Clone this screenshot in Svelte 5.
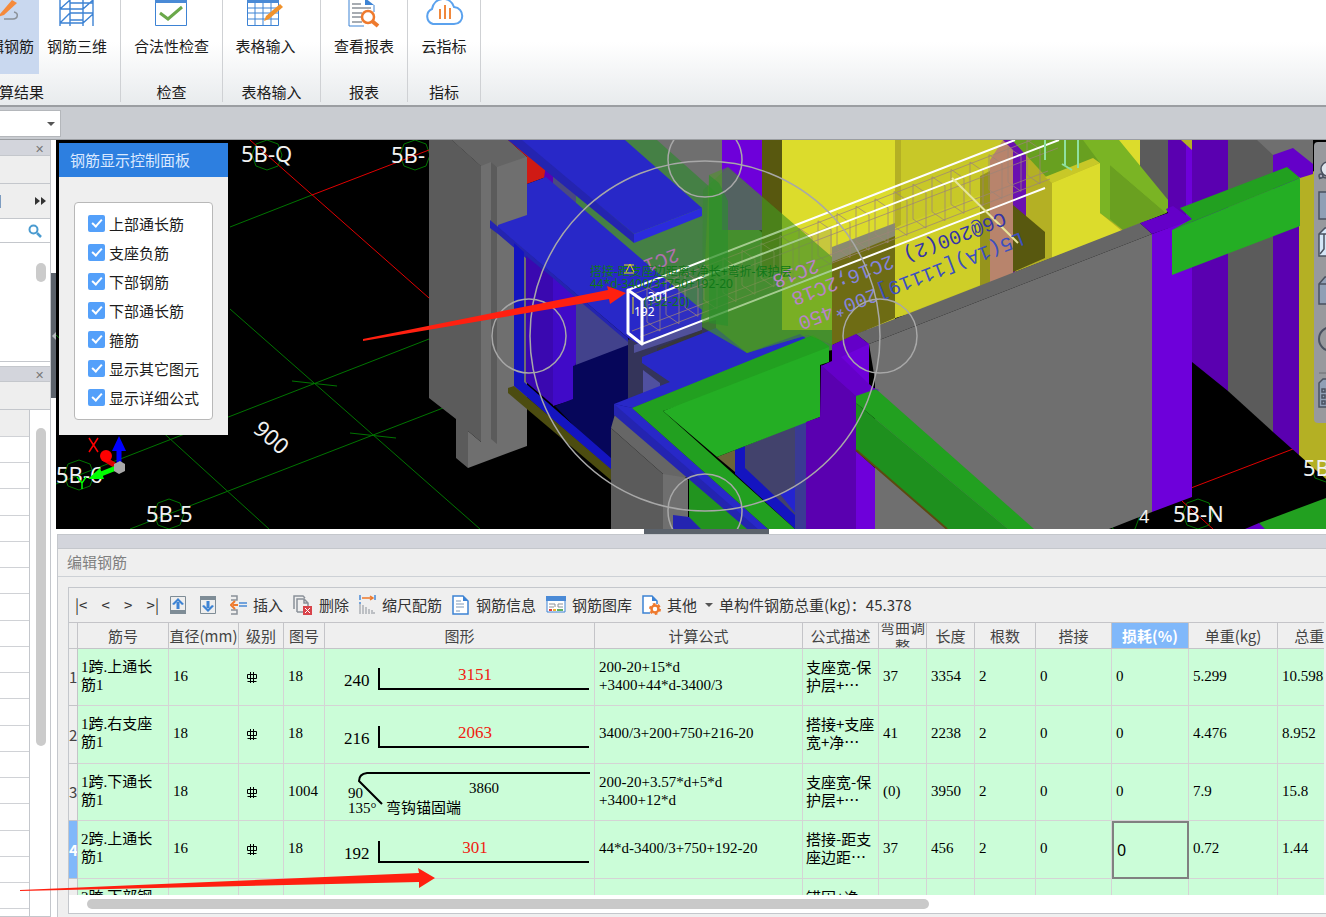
<script lang="ts">
  const filters = $state([
    { label: '上部通长筋', on: true },
    { label: '支座负筋', on: true },
    { label: '下部钢筋', on: true },
    { label: '下部通长筋', on: true },
    { label: '箍筋', on: true },
    { label: '显示其它图元', on: true },
    { label: '显示详细公式', on: true }
  ]);

  const columns = [
    { title: '', width: 9 },
    { title: '筋号', width: 91 },
    { title: '直径(mm)', width: 70 },
    { title: '级别', width: 45 },
    { title: '图号', width: 41 },
    { title: '图形', width: 270 },
    { title: '计算公式', width: 208 },
    { title: '公式描述', width: 76 },
    { title: '弯曲调整', width: 48 },
    { title: '长度', width: 48 },
    { title: '根数', width: 61 },
    { title: '搭接', width: 76 },
    { title: '损耗(%)', width: 77 },
    { title: '单重(kg)', width: 89 },
    { title: '总重(kg)', width: 90 }
  ];
  const tableWidth = columns.reduce((sum, c) => sum + c.width, 0);

  const bars = [
    { name: '1跨.上通长筋1', d: 16, shape: 18, side: '240', main: '3151', formula: ['200-20+15*d', '+3400+44*d-3400/3'], desc: ['支座宽-保', '护层+…'], bend: '37', len: 3354, weight: '5.299', total: '10.598' },
    { name: '1跨.右支座筋1', d: 18, shape: 18, side: '216', main: '2063', formula: ['3400/3+200+750+216-20'], desc: ['搭接+支座', '宽+净…'], bend: '41', len: 2238, weight: '4.476', total: '8.952' },
    { name: '1跨.下通长筋1', d: 18, shape: 1004, side: '90', main: '3860', hook: true, formula: ['200-20+3.57*d+5*d', '+3400+12*d'], desc: ['支座宽-保', '护层+…'], bend: '(0)', len: 3950, weight: '7.9', total: '15.8' },
    { name: '2跨.上通长筋1', d: 16, shape: 18, side: '192', main: '301', formula: ['44*d-3400/3+750+192-20'], desc: ['搭接-距支', '座边距…'], bend: '37', len: 456, weight: '0.72', total: '1.44' }
  ];
  const current = 3;
  let loss = $state('0');

  // stirrups of the selected beam, spaced evenly along its axis
  const slope = 0.387;
  const stirrups = Array.from({ length: 21 }, (_, i) => {
    const x = 660 + i * 19;
    const top = 300 - (x - 642) * slope;
    return { x, top: top + 3, bottom: top + 38 };
  });

  const marks = [
    { x: 267, y: 155 },
    { x: 415, y: 155 },
    { x: 169, y: 514 },
    { x: 79, y: 475 },
    { x: 1198, y: 514 },
    { x: 1124, y: 518 },
    { x: 1326, y: 467 }
  ];
  const rows = Array.from({ length: 19 });
</script>

<div class="app" lang="zh-CN">
  <header class="ribbon">
    <section class="group results">
      <div class="tools">
        <button class="tool active">
          <svg width="39" height="32" viewBox="0 0 39 32"><path d="M0 14 12 0l5 3L4 15l-6 2z" fill="#f58a3c" /><path d="M4 19h9c5 0 6-6 1-7" fill="none" stroke="#8b9199" stroke-width="1.5" /></svg>
          <span>编辑钢筋</span>
        </button>
        <button class="tool wide">
          <svg width="36" height="32" viewBox="0 0 36 32"><path d="M1 0v26M11 0v26M24 0v26M34 0v26M1 9 11 0M1 9h23l10-9M11 3h23M1 23h23l10-9M1 23 11 13h23M11 20h13" fill="none" stroke="#3d83d4" stroke-width="1.4" /></svg>
          <span>钢筋三维</span>
        </button>
      </div>
      <span class="caption">计算结果</span>
    </section>
    <section class="group check">
      <button class="tool">
        <svg width="32" height="32" viewBox="0 0 32 32"><path d="M.5-2h31v27.500h-31z" fill="#fff" stroke="#3d83d4" /><path d="M0-2h32v5H0z" fill="#4a8ad6" /><path d="m5 13 8 6L27 7" fill="none" stroke="#6aa84a" stroke-width="3" /></svg>
        <span>合法性检查</span>
      </button>
      <span class="caption">检查</span>
    </section>
    <section class="group input">
      <button class="tool">
        <svg width="36" height="32" viewBox="0 0 36 32"><path d="M.5 1h31v24.500H.5z" fill="#fff" stroke="#3d83d4" /><path d="M0-1h32v4H0z" fill="#4a8ad6" /><path d="M0 8h31M0 13h31M0 19h31M8 3v22M16 3v22M24 3v22" stroke="#3d83d4" /><path d="m17 21 2-5L33 4l3 3-14 12z" fill="#f0922c" /></svg>
        <span>表格输入</span>
      </button>
      <span class="caption">表格输入</span>
    </section>
    <section class="group report">
      <button class="tool">
        <svg width="32" height="32" viewBox="0 0 32 32"><path d="M17-1H1v27h15M26 5v7" fill="none" stroke="#3d83d4" /><path d="M17-2v7h9z" fill="#3d83d4" /><path d="M4 4h9M4 8h19M4 13h10M4 17h9M4 22h10" stroke="#8b9199" stroke-width="1.500" /><circle cx="20" cy="17" r="6" fill="#fff" stroke="#ee7a2e" stroke-width="2.500" /><path d="m24 21 6 5" stroke="#ee7a2e" stroke-width="4" /></svg>
        <span>查看报表</span>
      </button>
      <span class="caption">报表</span>
    </section>
    <section class="group index">
      <button class="tool">
        <svg width="40" height="32" viewBox="0 0 40 32"><path d="M9 24a8 8 0 0 1-1-15C10-3 26-5 30 7c11 1 11 17 0 17z" fill="#fff" stroke="#5ba2ee" stroke-width="2" /><path d="M16 9v10M21 5v14M26 8v11" stroke="#f0883c" stroke-width="2" /></svg>
        <span>云指标</span>
      </button>
      <span class="caption">指标</span>
    </section>
  </header>

  <div class="selector">
    <select aria-label="楼层"><option></option></select>
    <span class="caret"></span>
  </div>

  <div class="workspace">
    <aside class="dock">
      <div class="dock-head"><button aria-label="关闭">✕</button></div>
      <div class="dock-bar"></div>
      <div class="dock-bar more">
        <i class="stub"></i>
        <svg width="11" height="8" viewBox="0 0 11 8"><path d="m0 0 5 4-5 4zM6 0l5 4-5 4z" fill="#333" /></svg>
      </div>
      <div class="search">
        <svg width="14" height="14" viewBox="0 0 14 14"><circle cx="5.500" cy="5.500" r="4" fill="none" stroke="#4a9bd0" stroke-width="2" /><path d="m9 9 4 4" stroke="#4a9bd0" stroke-width="2.500" /></svg>
      </div>
      <div class="tree"><i class="thumb short"></i></div>
      <div class="dock-head second"><button aria-label="关闭">✕</button></div>
      <div class="dock-bar"></div>
      <div class="props">
        <div class="lines">{#each rows as _}<i></i>{/each}</div>
        <i class="thumb long"></i>
      </div>
    </aside>
    <div class="split">
      <button class="fold" aria-label="收起"><svg width="5" height="8" viewBox="0 0 5 8"><path d="M5 0v8L1 4z" fill="#b8bcc2" /></svg></button>
    </div>

    <main>
      <div class="view">
        <svg class="scene" viewBox="56 140 1270 389" preserveAspectRatio="xMinYMin slice">
          <rect x="56" y="140" width="1270" height="389" fill="#000" />
          <g stroke="#007400" fill="none">
            <path d="m56 484 373-145M130 529l313-121M230 227l82-32M230 309l250 220M56 335l213 194M292 381l45 5M350 433l46 5" />
            {#each marks as m}
              <path d="M{m.x} {m.y - 15}l11 4 4 11-4 11-11 4-11-4-4-11 4-11z" />
            {/each}
          </g>
          <path d="m250 140 179 158M312 195l117-45M1191 488l102-39M1182 501l31 28" stroke="#e00000" fill="none" />

          <!-- left column -->
          <path fill="#6f6f6f" d="m452 140 56 0 19 17v289l-59 22v-37l13 11V166z" />
          <path fill="#646464" d="m452 140h56l18 17-29 10-6-5-10 4z" />
          <path fill="#5b5b5b" d="m429 140h23l29 26v276l-13-11v37l-12-10v-39l-27-21zM491 162l6 5v277l-6-5z" />
          <!-- rooms behind the slabs -->
          <path fill="#458045" d="M553 172V140h170v60l60 50 50 20v80l-120 20-160-180z" />
          <path fill="#6f6f6f" d="m657 140h65v58z" />
          <path fill="#6e00da" d="m722 140h40v90h-40z" />
          <path fill="#58580f" d="m762 140h20v130h-20z" />
          <path fill="#dcdc2c" d="m782 140h113v190h-113z" />
          <path fill="#c8c828" d="M895 140h120v145l-120 33z" />
          <path fill="#b4b024" d="M895 140h6v90h-6zM1010 140h130v84l-130 50z" />
          <path fill="#cece28" d="M901 225l79-30v90l-85 33v-90z" />
          <path fill="#6e6c14" d="m832 258 63-26v86l-63 27z" />
          <path fill="#8a8a70" d="m832 247 63-24v13l-63 26z" />
          <path fill="#96941c" d="m980 176 10-5v118l-10 4z" />
          <path fill="#b8846c" d="m990 160 13-20h10v140l-23 10z" />
          <path fill="#6a10b0" d="m1003 140h10l13 15v100l-13 20V150z" />
          <path fill="#58580f" d="m1013 205 32 27v26l-32 14z" />
          <path fill="#68a020" d="M1012 140h78l10 23-50 18z" />
          <path fill="#c8c828" d="m1045 177 48-19 7 5-48 20z" />
          <path fill="#dcdc2c" d="m1052 183 48-20v50l22 18-70 27zM1118 140h22v35l-22-18z" />
          <path fill="#5b5b5b" d="M1140 140h28v70l-28-30z" />
          <path fill="#7ab424" d="m1083 140h36l54 66-7 7-43 17-23-17v-50z" />
          <path fill="#6aa020" d="m1110 165 56 48-43 17-13-11z" />
          <path fill="#7ab424" d="m1110 165V148l63 58-7 7z" />

          <path fill="#d01a14" d="m508 140h13l25 27v10l-19 7v-27z" />
          <path fill="#5a00b4" d="m546 165 7 7v14l-9-8z" />
          <path fill="#4a4a80" d="m553 172 23 21v13l-23-20z" />
          <path fill="#34345a" d="m626 340 90-20v60l-84 32-21 10z" />
          <path fill="#2828c8" d="m498 225 29-10v-31l19-7 99 85 57 48-2 18-58 18-14-8-130-110z" />
          <path fill="#2424b0" d="m490 220 138 118v8L498 234l-8-6z" />
          <path fill="#2828c8" d="m520 140h105l77 68-68 26z" />
          <path fill="#2424b0" d="m508 140h14l112 94v9z" />
          <path fill="#2b2bdc" d="m634 234 68-26v8l-68 27z" />
          <path fill="#3a08b0" d="m526 256 27 22v127l-27-23z" />
          <path fill="#400ac8" d="m553 278 23 20v64l-3 38-20 6z" />
          <path fill="#42428c" d="m576 298 52 44v6l-52 20z" />
          <path fill="#06065a" d="m573 366 55-21v70l-17 15v34l-56-58 18-7z" />
          <path fill="#1414c0" d="m514 243 10 9v130l87 76v12l-97-84z" />
          <path fill="#4c4c10" d="m508 388 6-2 98 84v11L508 393z" />
          <path fill="#50509a" d="m634 345 68-24v9l-68 23z" />
          <path fill="#38383a" d="m657 348 45-18v8l-45 18z" />
          <path fill="#5050a0" d="m643 370 17 13v6l-17 8z" />

          <!-- middle ledge -->
          <path fill="#22941f" d="m689 472 66 57h-66z" />
          <path fill="#6f6f6f" d="m663 474 12-6 13 12v45l-10 4h-15z" />
          <path fill="#666" d="m611 428 4-14 74 64-26-4z" />
          <path fill="#5b5b5b" d="m611 428 52 46v55h-52z" />
          <path fill="#2424b0" d="m673 515 16 2 12 12h-28z" />
          <path fill="#6b6438" d="m717 457 18-7v22z" />
          <path fill="#42426c" d="m745 446 61-25v108l-61-59z" />
          <path fill="#1414c0" d="m735 450 10-4v22l50 47v14l-60-55z" />
          <path fill="#2424d0" d="m780 494 16-8v28z" />
          <path fill="#3a3a94" d="m795 426 11-5v108h-11z" />
          <path fill="#2828c8" d="m642 357 74-29 31 25 53-19 7 5-175 69-18-4 56-22-28-19z" />
          <path fill="#2424b0" d="m614 404 18 4 136 121h-21L614 415z" />
          <path fill="#2828c8" d="m614 404 18 4 136 121h-10z" />
          <path fill="#22a020" d="m632 408 181-73 16 11v10l-166 55 132 118h-27z" />
          <path fill="#24ae24" d="m663 411 166-64v15l-9 3v52l-103 40z" />

          <!-- long wall and the posts on its ends -->
          <path fill="#6f6f6f" d="m869 344 283-110v278l-43 17H875V380z" />
          <path fill="#6e00da" d="m838 352 31-10v44l10 4-23 14zM855 450l20 18v61h-20z" />
          <path fill="#666" d="m856 334 284-111 12 11-283 110z" />
          <path fill="#6400c8" d="m832 345 24-11 13 10-28 13 28 27 6 5-19 8-35-31 11-5z" />
          <path fill="#5a00b0" d="m821 365 35 31v133h-50V422l14-5z" />
          <path fill="#22a020" d="m856 396 20-7 158 140h-26L856 403z" />
          <path fill="#1e901e" d="m856 403 152 126h-61l-91-79z" />
          <path d="m856 450 91 79" stroke="#5c4a10" stroke-width="2" />

          <!-- right side -->
          <path fill="#5a00b0" d="M1168 140h60v251l-36-29-24-130z" />
          <path fill="#6e00da" d="M1186 140h6v90h-6zM1152 234l40-15v278l-40 15z" />
          <path fill="#6400c8" d="m1140 223 28-10-2-4 7-3 19 14-40 14z" />
          <path fill="#5b5b5b" d="M1228 140h45v292l-45-41z" />
          <path fill="#6f6f6f" d="M1257 140h56v25l-40-10z" />
          <path fill="#5a00b0" d="M1273 155h26v300l-26-23z" />
          <path fill="#b4b024" d="m1299 176 14-5 13 9v299l-27-24zM1181 140h11v10z" />
          <path fill="#6400c8" d="m1273 155 20-7 20 16v10l-13 4-13-11-14 6z" />
          <path fill="#22a020" d="m1180 208 107-41 13 11-128 52 20-11z" />
          <path fill="#24ae24" d="m1172 230 128-52v48l-128 49z" />
          <path fill="#6400c8" d="m1245 529 14-6 8 6z" />
          <path fill="#22a020" d="m1259 523 67-25v31h-61z" />

          <!-- selected beam -->
          <path d="m642 300 190-75v47l-190 72z" fill="#5050a0" opacity="0.15" />
          <path fill="#2f8f20" fill-opacity="0.3" d="m703 190 25-23 104 90v88l-24-10-61 18-45-26z" />
          <g fill="none" stroke="#9c8478" stroke-opacity="0.75">
            {#each stirrups as s}
              <path d="M{s.x} {s.top}V{s.bottom}l-13-9V{s.top - 9}z" />
            {/each}
            <path d="m632 331 416-160M640 337l410-158M634 294l400-155M648 305l410-157" />
          </g>
          <g fill="none" stroke="#fff" stroke-width="2">
            <path d="m628 290 387-150M642 300l417-160M642 344l403-156" />
            <path d="m628 290 14 10v44l-14-11z" stroke-width="3" stroke-linejoin="round" />
          </g>
          <path d="m952 178 66 65" stroke="#e6e69a" stroke-width="2" />
          <path d="M1065 140v25M1078 140v28M1062 164l10 6M1045 140v20" stroke="#8fe0a0" stroke-width="2" />
          <path fill="#4c9a20" fill-opacity="0.5" d="m728 167 104 90v88l-24-10-61 18-45-26 7-152z" />
          <path fill="#28902c" fill-opacity="0.6" d="m709 175 10 8 9 18v125l-19-3z" />
          <g class="plan" font-size="20">
            <text transform="translate(1021 232) rotate(159)" fill="#3c50c0">L5(1A)[11119]<tspan fill="#8484dc">200*</tspan><tspan fill="#b884c8">450</tspan></text>
            <text transform="translate(1003 212) rotate(159)" fill="#3434a8">C6@200(2)<tspan fill="#8484dc" dx="12">2C16;</tspan><tspan fill="#b884c8">2C18</tspan></text>
            <text transform="translate(816 259) rotate(159)" fill="#b884c8">2C18</text>
            <text transform="translate(676 248) rotate(159)" fill="#b070b0">2C1</text>
          </g>
          <g fill="#107818" font-size="12">
            <text x="590" y="276">搭接-距支座边距离+净长+弯折-保护层</text>
            <text x="590" y="288">44*d-3400/3+750+192-20</text>
            <text x="644" y="306">(192-20)</text>
          </g>
          <path d="M624 265h10M634 273h-10M626 272l4-8 4 8M633 297v17" stroke="#e8e020" fill="none" />
          <g fill="#fff" font-size="12"><text x="648" y="301">301</text><text x="634" y="316">192</text></g>

          <g fill="none" stroke="#a8a8a8" stroke-width="1.500">
            <circle cx="705" cy="336" r="175" />
            <circle cx="529" cy="336" r="37" />
            <circle cx="705" cy="160" r="37" />
            <circle cx="880" cy="336" r="37" />
            <circle cx="705" cy="511" r="37" />
          </g>

          <g fill="#f2f2f2" font-size="22">
            <text x="241" y="162">5B-Q</text>
            <text x="391" y="163">5B-</text>
            <text x="146" y="522">5B-5</text>
            <text x="56" y="483">5B-6</text>
            <text x="1173" y="522">5B-N</text>
            <text x="1303" y="476">5B</text>
            <text x="1139" y="523" font-size="18">4</text>
            <text transform="translate(252 431) rotate(41)">900</text>
          </g>
          <!-- axes -->
          <path d="M116 466 103 458" stroke="#e00000" stroke-width="5" />
          <circle cx="106" cy="456" r="6" fill="#f00" />
          <path d="M119 466v-20" stroke="#00f" stroke-width="5" />
          <path d="m119 436 7 15h-14z" fill="#00f" />
          <path d="m116 468-20 8" stroke="#0f0" stroke-width="5" />
          <path d="m88 479 12-11 4 11z" fill="#0f0" />
          <path d="M114 464l6-3 5 3v7l-6 3-5-3z" fill="#a8a8a8" />
          <path d="m89 438 9 14M98 438l-9 14" stroke="#f00" stroke-width="1.500" />
          <path d="m77 477 5 6 4-6M82 483v6" stroke="#0f0" stroke-width="1.500" fill="none" />

          <path d="m363 339 245-49-1-4 19 7-16 11-1-5-246 42z" fill="#ff2010" />
        </svg>

        <div class="panel">
          <h2>钢筋显示控制面板</h2>
          <div class="panel-body">
            {#each filters as f}
              <label><input type="checkbox" bind:checked={f.on} />{f.label}</label>
            {/each}
          </div>
        </div>

        <div class="viewbar">
          <svg width="12" height="281" viewBox="0 0 12 281">
            <g stroke="#4a5260" stroke-width="1.500">
              <circle cx="14" cy="27" r="7" fill="#dfe5ec" /><path d="m5 37 3-2 4 1" fill="none" /><circle cx="7" cy="34" r="2" fill="#aab" />
              <path d="M5 50h10v27H5z" fill="#8f9fb5" />
              <path d="m5 92 6-6h5v28H5z" fill="#d3e6f6" /><path d="M5 92h8M10 92v15l-4 5" fill="none" />
              <path d="m5 142 6-7h5v27H5z" fill="#8f9fb5" /><path d="M5 142h9" />
              <circle cx="17" cy="197" r="12" fill="none" stroke-width="2" />
              <path d="m5 241 4-4h5v28H5z" fill="#8f9fb5" /><path d="M8 247h3v3H8zM8 253h3v3H8zM8 259h3v3H8z" fill="none" />
            </g>
            <path d="M5 231h7" stroke="#6a6c70" />
          </svg>
        </div>
      </div>

      <div class="grip"><i></i></div>

      <section class="editor">
        <div class="strip"></div>
        <h2>编辑钢筋</h2>
        <div class="box">
          <div class="toolbar">
            <div class="nav">
              <button>|&lt;</button><button>&lt;</button><button>&gt;</button><button>&gt;|</button>
            </div>
            <button class="ico" aria-label="上移"><svg width="16" height="18" viewBox="0 0 16 18"><path d="M.5.500h15v17H.5z" fill="#eee" stroke="#7e8c96" /><path d="M0 14h16v4H0z" fill="#7e8c96" /><path d="M8 13V6" stroke="#3d83d4" stroke-width="3" /><path d="m2 8 6-6 6 6-2 1-4-4-4 4z" fill="#3d83d4" /></svg></button>
            <button class="ico" aria-label="下移"><svg width="16" height="18" viewBox="0 0 16 18"><path d="M.5.500h15v17H.5z" fill="#eee" stroke="#7e8c96" /><path d="M0 0h16v4H0z" fill="#7e8c96" /><path d="M8 5v7" stroke="#3d83d4" stroke-width="3" /><path d="m2 10 6 6 6-6-2-1-4 4-4-4z" fill="#3d83d4" /></svg></button>
            <button class="act"><svg width="17" height="20" viewBox="0 0 17 20"><path d="M1 1h6v4H1M1 15h6v4H1" fill="none" stroke="#8b9199" stroke-width="1.500" /><path d="M8 10H3M5 6 1 10l4 4" fill="none" stroke="#ee7a2e" stroke-width="2" /><path d="M9 8h8M9 11h8" stroke="#4a8ad6" stroke-width="1.500" /></svg>插入</button>
            <button class="act"><svg width="20" height="20" viewBox="0 0 20 20"><path d="M1 14V1h9l2 2M4 17V4h7l4 4v3M10 17H4M11 4v4h4" fill="none" stroke="#8b9199" stroke-width="1.500" /><path d="M10 11h9v9h-9z" fill="#d9434a" /><path d="m12 13 5 5M17 13l-5 5" stroke="#fff" /></svg>删除</button>
            <button class="act"><svg width="17" height="20" viewBox="0 0 17 20"><path d="M1 0v5M16 0v5M1 7v2" stroke="#4a8ad6" stroke-width="1.500" /><path d="M3 3h10M11 1l3 2-3 2" stroke="#ee7a2e" fill="none" stroke-width="1.500" /><path d="M1 9v10M4 10v9M7 12v7M10 14v5M13 15v4M15 17v2" stroke="#8b9199" /></svg>缩尺配筋</button>
            <button class="act"><svg width="18" height="20" viewBox="0 0 18 20"><path d="M1 1h10l5 5v13H1z" fill="#fff" stroke="#3d83d4" stroke-width="1.500" /><path d="M11 1v5h5z" fill="#3d83d4" /><path d="M4 6h5M4 9h8M4 12h8M4 16h4" stroke="#7e9ab8" /></svg>钢筋信息</button>
            <button class="act"><svg width="20" height="18" viewBox="0 0 20 18"><path d="M1 1h18v15H1z" fill="#fff" stroke="#3d83d4" /><path d="M0 0h20v5H0z" fill="#4a8ad6" /><path d="M3 8h6v3M17 8h-5v3h5M3 11h5" stroke="#8b9199" fill="none" /><path d="M3 14h3" stroke="#e04040" stroke-width="2" /><path d="M7 14h3" stroke="#f0b030" stroke-width="2" /><path d="M11 14h6" stroke="#60b060" stroke-width="2" /></svg>钢筋图库</button>
            <button class="act"><svg width="19" height="20" viewBox="0 0 19 20"><path d="M8 18H1V1h9l5 5v3" fill="#fff" stroke="#3d83d4" stroke-width="1.500" /><path d="M10 1v5h5z" fill="#3d83d4" /><circle cx="13" cy="14" r="3.500" fill="#fff" stroke="#ee7a2e" stroke-width="2.500" /><circle cx="13" cy="14" r="5" fill="none" stroke="#ee7a2e" stroke-width="2" stroke-dasharray="2.600 2.600" /></svg>其他<span class="caret"></span></button>
            <span class="sum">单构件钢筋总重(kg)：45.378</span>
          </div>

          <div class="grid">
            <table style="width: {tableWidth}px">
              <colgroup>{#each columns as c}<col style="width: {c.width}px" />{/each}</colgroup>
              <thead>
                <tr>{#each columns as c}<th class:picked={c.title === '损耗(%)'}><div>{c.title}</div></th>{/each}</tr>
              </thead>
              <tbody>
                {#each bars as b, i}
                  <tr>
                    <th class:picked={i === current}>{i + 1}</th>
                    <td class="name">{b.name}</td>
                    <td>{b.d}</td>
                    <td class="grade"><svg width="12" height="13" viewBox="0 0 12 13"><path d="M1.500 3.500h9v4h-9zM4.500 1v11M7.500 1v11M1.500 10.500h9" fill="none" stroke="#000" /></svg></td>
                    <td>{b.shape}</td>
                    <td class="shape">
                      <svg width="269" height="56" viewBox="0 0 269 56">
                        {#if b.hook}
                          <path d="M265 9H42q-8 1-8 8l23 23" fill="none" stroke="#000" stroke-width="2" />
                          <g font-size="15"><text x="23" y="34">90</text><text x="23" y="49">135°</text><text x="61" y="49">弯钩锚固端</text><text x="144" y="29">{b.main}</text></g>
                        {:else}
                          <path d="M54 19v21h210" fill="none" stroke="#000" stroke-width="2" />
                          <g font-size="17"><text x="19" y="37">{b.side}</text><text x="150" y="31" text-anchor="middle" fill="#f02010">{b.main}</text></g>
                        {/if}
                      </svg>
                    </td>
                    <td>{#each b.formula as line}<div>{line}</div>{/each}</td>
                    <td class="desc">{#each b.desc as line}<div>{line}</div>{/each}</td>
                    <td>{b.bend}</td>
                    <td>{b.len}</td>
                    <td>2</td>
                    <td>0</td>
                    <td class:editing={i === current}>
                      {#if i === current}<input aria-label="损耗" bind:value={loss} />{:else}0{/if}
                    </td>
                    <td>{b.weight}</td>
                    <td>{b.total}</td>
                  </tr>
                {/each}
                <tr>
                  <th></th>
                  <td class="name">2跨.下部钢筋1</td>
                  <td></td><td></td><td></td><td></td><td></td>
                  <td class="desc"><div>锚固+净</div><div>长+…</div></td>
                  <td></td><td></td><td></td><td></td><td></td><td></td><td></td>
                </tr>
              </tbody>
            </table>
          </div>
          <div class="hscroll"><i></i></div>
        </div>
      </section>
    </main>
  </div>

  <svg class="pointer" width="420" height="24" viewBox="0 0 420 24"><path d="m0 22 399-17-1-5 17 10-16 10v-6L0 23z" fill="#ff2010" /></svg>
</div>

<style>
  :global(body) {
    margin: 0;
  }

  .app {
    position: relative;
    display: flex;
    flex-direction: column;
    height: 100vh;
    overflow: hidden;
    background: #fff;
    color: #1c1c1c;
    font: 15px/20px 'Noto Sans CJK SC', sans-serif;
  }

  button {
    padding: 0;
    border: 0;
    background: none;
    color: inherit;
    font: inherit;
  }

  svg {
    display: block;
    flex: none;
  }

  h2 {
    margin: 0;
    font-size: 15px;
    font-weight: 400;
  }

  /* ribbon */
  .ribbon {
    display: flex;
    flex: none;
    height: 105px;
    border-bottom: 2px solid #9b9ea2;
    background: linear-gradient(#fff 40%, #e8ebed);
  }

  .group {
    display: flex;
    flex-direction: column;
    align-items: center;
    justify-content: space-between;
    box-sizing: border-box;
    height: 102px;
    border-right: 1px solid #cfd1d4;
    white-space: nowrap;
  }

  .results {
    width: 121px;
    overflow: hidden;
    align-items: flex-start;
  }

  .check { width: 102px; }
  .input { width: 98px; }
  .report { width: 87px; }
  .index { width: 73px; }

  .tools {
    display: flex;
  }

  .tool {
    display: flex;
    flex-direction: column;
    align-items: center;
    gap: 4px;
    height: 74px;
  }

  .tool.wide {
    width: 76px;
  }

  .tool.active {
    width: 39px;
    align-items: flex-end;
    overflow: hidden;
    background: #c9d8ef;
  }

  .tool.active span {
    padding-right: 5px;
  }

  .input .tool {
    padding-right: 12px;
  }

  .results .caption {
    width: 44px;
    direction: rtl;
    overflow: hidden;
  }

  .selector {
    position: relative;
    flex: none;
    box-sizing: border-box;
    height: 33px;
    padding: 3px 0;
    border-bottom: 1px solid #9b9ea2;
    background: #c9ccd1;
  }

  .selector select {
    display: block;
    width: 61px;
    height: 27px;
    border: 1px solid #b4b7bb;
    border-left: 0;
    background: #fff;
    appearance: none;
  }

  .caret {
    display: inline-block;
    border: 4px solid transparent;
    border-top-color: #555;
    border-bottom: 0;
  }

  .selector .caret {
    position: absolute;
    left: 47px;
    top: 15px;
  }

  .workspace {
    display: flex;
    flex: 1;
    min-height: 0;
  }

  /* left dock */
  .dock {
    display: flex;
    flex: none;
    flex-direction: column;
    width: 51px;
    border-right: 1px solid #c4c7cc;
    box-sizing: border-box;
  }

  .dock > div {
    flex: none;
    box-sizing: border-box;
    border-bottom: 1px solid #c4c7cc;
  }

  .dock .dock-head {
    display: flex;
    align-items: center;
    justify-content: flex-end;
    height: 16px;
    padding-right: 5px;
    background: #d3d5dc;
    color: #777;
    font-size: 11px;
    line-height: 14px;
  }

  .dock-head button {
    width: 12px;
  }

  .dock .second {
    margin-top: 4px;
    border-top: 1px solid #c4c7cc;
  }

  .dock .dock-bar {
    height: 28px;
    background: #eee;
  }

  .dock .more {
    display: flex;
    align-items: center;
    justify-content: space-between;
    height: 35px;
    padding-right: 4px;
  }

  .stub {
    width: 1px;
    height: 13px;
    background: #7d9cc0;
  }

  .dock .search {
    display: flex;
    align-items: center;
    justify-content: flex-end;
    height: 24px;
    padding-right: 8px;
  }

  .dock .tree {
    height: 119px;
    padding: 20px 4px;
  }

  .thumb {
    display: block;
    width: 10px;
    margin-left: auto;
    border-radius: 5px;
    background: #cbcbcb;
  }

  .short { height: 19px; }
  .long { height: 318px; margin: 18px 4px 0 auto; }

  .dock .props {
    display: flex;
    flex: 1;
    min-height: 0;
    overflow: hidden;
  }

  .lines {
    width: 29px;
    border-right: 1px solid #c4c7cc;
  }

  .lines i {
    display: block;
    box-sizing: border-box;
    height: 26px;
    border-bottom: 1px solid #d0d2d6;
  }

  .lines i:first-child {
    height: 27px;
    background: #eee;
  }

  .lines i:nth-child(4n) {
    height: 27px;
  }

  .split {
    flex: none;
    width: 5px;
    padding-top: 133px;
  }

  .fold {
    display: block;
    width: 5px;
    height: 125px;
    background: #5b626b;
  }

  main {
    display: flex;
    flex: 1;
    flex-direction: column;
    min-width: 0;
  }

  /* 3d view */
  .view {
    position: relative;
    flex: none;
    overflow: hidden;
  }

  .scene {
    width: 100%;
    height: 389px;
    font-family: 'Noto Sans', 'Noto Sans CJK SC', sans-serif;
  }

  .plan {
    font-family: 'Liberation Mono', monospace;
  }

  .panel {
    position: absolute;
    left: 3px;
    top: 3px;
    width: 169px;
    background: #efefef;
  }

  .panel h2 {
    padding: 7px 11px;
    background: #2d7fe0;
    color: #dbe9ff;
  }

  .panel-body {
    margin: 25px 15px 15px;
    padding: 6px 13px 7px;
    border: 1px solid #b8b8b8;
    border-radius: 4px;
    background: #fff;
  }

  .panel label {
    display: flex;
    align-items: center;
    gap: 4px;
    height: 29px;
    white-space: nowrap;
  }

  .panel input {
    flex: none;
    width: 17px;
    height: 17px;
    margin: 0;
    border-radius: 2px;
    background: #bbb;
    appearance: none;
  }

  .panel input:checked {
    background: #54a0fa;
  }

  .panel input:checked::before {
    content: '';
    display: block;
    width: 4px;
    height: 8px;
    margin: 2px 6px;
    border: solid #fff;
    border-width: 0 2px 2px 0;
    transform: rotate(42deg);
  }

  .viewbar {
    position: absolute;
    right: 0;
    top: 2px;
    border-radius: 4px 0 0 4px;
    background: #97999d;
  }

  .grip {
    flex: none;
    height: 5px;
    padding-left: 30px;
  }

  .grip i {
    display: block;
    width: 125px;
    height: 5px;
    margin: 0 auto;
    background: #5b626b;
  }

  /* rebar editor */
  .editor {
    display: flex;
    flex: 1;
    flex-direction: column;
    min-height: 0;
    margin-left: 1px;
    border: 1px solid #c4c7cc;
    border-width: 1px 0 0 1px;
    background: #efefef;
  }

  .strip {
    flex: none;
    height: 13px;
    border-bottom: 1px solid #c4c7cc;
    background: #d3d5dc;
  }

  .editor h2 {
    padding: 3px 9px 4px;
    border-bottom: 1px solid #cdd1d6;
    color: #808080;
  }

  .box {
    display: flex;
    flex: 1;
    flex-direction: column;
    min-height: 0;
    margin: 10px 0 3px 10px;
    border: 1px solid #c4c7cc;
    border-right: 0;
  }

  .toolbar {
    display: flex;
    flex: none;
    align-items: center;
    height: 34px;
    padding-left: 6px;
    color: #333;
    white-space: nowrap;
  }

  .nav {
    display: flex;
    justify-content: space-between;
    width: 84px;
    margin-right: 11px;
  }

  .ico {
    margin-right: 14px;
  }

  .act {
    display: flex;
    align-items: center;
    gap: 6px;
    margin-right: 10px;
  }

  .act .caret {
    margin: 0 -4px 0 2px;
  }

  .grid {
    flex: 1;
    min-height: 0;
    margin-right: 2px;
    overflow: hidden;
  }

  table {
    border-collapse: separate;
    border-spacing: 0;
    table-layout: fixed;
  }

  th,
  td {
    box-sizing: border-box;
    padding: 0;
    border-right: 1px solid #d5d3d5;
    border-bottom: 1px solid #d5d3d5;
    overflow: hidden;
  }

  th {
    border-color: #c4c4c8;
    background: #efefef;
    color: #444;
    font-weight: 400;
  }

  thead th {
    height: 27px;
    border-top: 1px solid #c4c4c8;
  }

  thead div {
    display: flex;
    align-items: center;
    justify-content: center;
    height: 25px;
    overflow: hidden;
    text-align: center;
    line-height: 19px;
  }

  th.picked {
    background: #80b8fa;
    color: #fff;
    font-weight: 700;
  }

  tbody tr {
    height: 57px;
  }

  tbody tr:nth-child(even) {
    height: 58px;
  }

  td {
    padding: 0 3px 3px 4px;
    background: #cbfdd8;
    color: #000;
    font: 15px/18px 'Liberation Serif', 'Noto Sans CJK SC', serif;
    white-space: nowrap;
  }

  .name {
    padding-right: 10px;
    padding-left: 3px;
    white-space: normal;
    word-break: break-all;
  }

  .desc {
    padding-left: 3px;
    font-family: 'Noto Sans CJK SC', sans-serif;
  }

  .grade svg {
    margin: 3px 0 0 3px;
  }

  .shape {
    padding: 0;
  }

  .editing {
    padding: 0;
    border: 2px solid #808080;
  }

  .editing input {
    display: block;
    box-sizing: border-box;
    width: 100%;
    height: 36px;
    padding: 0 3px;
    border: 0;
    outline: 0;
    background: none;
    font: 16px 'Noto Sans', sans-serif;
  }

  .hscroll {
    flex: none;
    height: 10px;
    padding: 4px 0;
    background: #fff;
  }

  .hscroll i {
    display: block;
    width: 67%;
    height: 10px;
    margin-left: 18px;
    border-radius: 5px;
    background: #c9c9c9;
  }

  .pointer {
    position: absolute;
    left: 20px;
    top: 868px;
    pointer-events: none;
  }
</style>
